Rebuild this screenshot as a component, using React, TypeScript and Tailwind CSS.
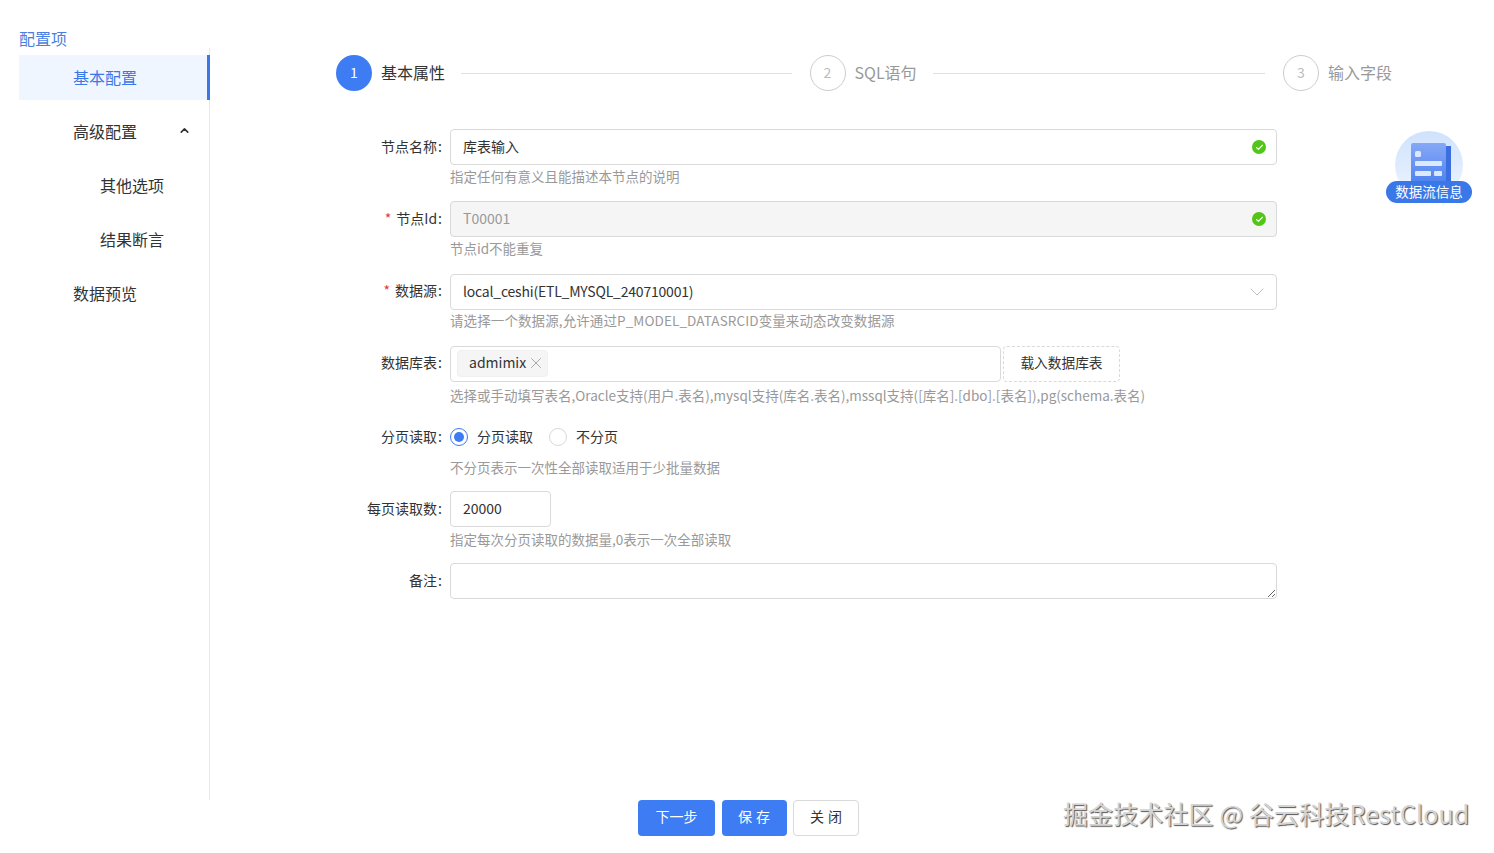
import { Check, ChevronDown, ChevronUp, X } from "lucide-react";
import type { ReactNode } from "react";

const font = "font-['Noto_Sans_CJK_SC','Noto_Sans',sans-serif]";

const steps = [
  { n: 1, label: "基本属性", active: true },
  { n: 2, label: "SQL语句", active: false },
  { n: 3, label: "输入字段", active: false },
];

const Status = () => (
  <span className="absolute right-[11px] top-[11px] flex h-[14px] w-[14px] items-center justify-center rounded-full bg-[#52c41a]">
    <Check className="h-[9px] w-[9px] text-white" strokeWidth={3} />
  </span>
);

const Row = ({
  label,
  required,
  help,
  helpClass = "",
  labelClass = "pb-[2px]",
  children,
}: {
  label: string;
  required?: boolean;
  help?: string;
  helpClass?: string;
  labelClass?: string;
  children: ReactNode;
}) => (
  <div className="flex h-[72.4px]">
    <label className={`flex h-9 w-[106px] shrink-0 items-center justify-end text-[14px] text-[#333] ${labelClass}`}>
      {required && <span className="mr-[5px] text-[14px] text-[#e5383b]">*</span>}
      {label}
      <span className="ml-[1px]">:</span>
    </label>
    <div className="ml-2 w-[827px]">
      {children}
      {help && (
        <div className={`h-6 whitespace-nowrap text-[13.5px] leading-[22px] text-[#999] ${helpClass}`}>{help}</div>
      )}
    </div>
  </div>
);

const inputBox = "h-9 rounded border border-[#d9d9d9] px-3 pb-[2px] text-[14px] text-[#333] outline-none";

export default function App() {
  return (
    <div className={`relative h-[853px] w-[1494px] overflow-hidden bg-white ${font}`}>
      <div className="flex h-[800px]">
        {/* 左侧菜单 */}
        <aside className="flex w-[210px] shrink-0 flex-col pl-[19px] pt-[30px]">
          <div className="h-[18px] text-[16px] leading-[16px] text-[#4a7fe0]">配置项</div>
          <nav className="flex-1 border-r border-[#e8e8e8] pt-[7px] text-[16px] text-[#333]">
            <div className="mr-[-1px] flex h-[45px] items-center border-r-[3px] border-[#3b78e7] bg-[#eff6ff] pb-[2px] pl-[54px] text-[#3b78e7]">
              基本配置
            </div>
            <div className="mt-[9px] flex h-[45px] items-center justify-between pb-[2px] pl-[54px] pr-[18px]">
              高级配置
              <ChevronUp className="h-[13px] w-[13px] text-[#333]" strokeWidth={3} />
            </div>
            <div className="mt-[9px] flex h-[45px] items-center pb-[2px] pl-[81px]">其他选项</div>
            <div className="mt-[9px] flex h-[45px] items-center pb-[2px] pl-[81px]">结果断言</div>
            <div className="mt-[9px] flex h-[45px] items-center pb-[2px] pl-[54px]">数据预览</div>
          </nav>
        </aside>

        <main className="flex-1 pl-[126px] pt-[55px]">
          {/* 步骤条 */}
          <div className="flex h-9 w-[1056px] items-center">
            {steps.map((s, i) => (
              <div key={s.n} className={`flex items-center ${i < 2 ? "flex-1" : ""}`}>
                <span
                  className={`flex h-9 w-9 shrink-0 items-center justify-center rounded-full pb-[2px] text-[14px] ${
                    s.active ? "bg-[#3d7cf2] text-white" : "border border-[#ccc] text-[#bbb]"
                  }`}
                >
                  {s.n}
                </span>
                <span
                  className={`ml-[9px] whitespace-nowrap pb-[2px] text-[16px] ${s.active ? "text-[#333]" : "text-[#999]"}`}
                >
                  {s.label}
                </span>
                {i < 2 && <span className="ml-4 mr-[18px] h-px flex-1 bg-[#e0e0e0]" />}
              </div>
            ))}
          </div>

          {/* 表单 */}
          <form className="mt-[38px]">
            <Row label="节点名称" help="指定任何有意义且能描述本节点的说明">
              <div className="relative">
                <input readOnly value="库表输入" className={`${inputBox} w-full`} />
                <Status />
              </div>
            </Row>
            <Row label="节点Id" required help="节点id不能重复">
              <div className="relative">
                <input readOnly value="T00001" className={`${inputBox} w-full bg-[#f5f5f5] text-[#999]`} />
                <Status />
              </div>
            </Row>
            <Row
              label="数据源"
              required
              help="请选择一个数据源,允许通过P_MODEL_DATASRCID变量来动态改变数据源"
              helpClass="-mt-px tracking-[0.1px]"
            >
              <div className="relative">
                <input
                  readOnly
                  value="local_ceshi(ETL_MYSQL_240710001)"
                  className={`${inputBox} w-full tracking-[-0.2px]`}
                />
                <ChevronDown className="absolute right-2 top-[6px] h-6 w-6 text-[#bfbfbf]" strokeWidth={1} />
              </div>
            </Row>
            <Row
              label="数据库表"
              labelClass="pb-1"
              help="选择或手动填写表名,Oracle支持(用户.表名),mysql支持(库名.表名),mssql支持([库名].[dbo].[表名]),pg(schema.表名)"
              helpClass="mt-[2px]"
            >
              <div className="flex">
                <div className="flex h-9 w-[551px] items-center rounded border border-[#d9d9d9] pb-px pl-[6px]">
                  <span className="flex h-[27px] w-[91px] items-center rounded-sm border border-[#f0f0f0] bg-[#f5f5f5] pb-[2px] pl-[11px] text-[14px] text-[#333]">
                    admimix
                    <X className="ml-[1px] h-[18px] w-[18px] text-[#999]" strokeWidth={1.1} />
                  </span>
                </div>
                <button
                  type="button"
                  className="ml-[2px] h-9 w-[117px] rounded border border-dashed border-[#d9d9d9] pb-1 text-[13.7px] text-[#333]"
                >
                  载入数据库表
                </button>
              </div>
            </Row>
            <Row label="分页读取" labelClass="" help="不分页表示一次性全部读取适用于少批量数据" helpClass="mt-px">
              <div className="flex h-9 items-center text-[14px] text-[#333]">
                <span className="flex h-[18px] w-[18px] items-center justify-center rounded-full border border-[#3d7cf2]">
                  <span className="h-[10px] w-[10px] rounded-full bg-[#3d7cf2]" />
                </span>
                <span className="ml-[9px]">分页读取</span>
                <span className="ml-4 h-[18px] w-[18px] rounded-full border border-[#d9d9d9]" />
                <span className="ml-[9px]">不分页</span>
              </div>
            </Row>
            <Row label="每页读取数" labelClass="" help="指定每次分页读取的数据量,0表示一次全部读取" helpClass="mt-px">
              <input readOnly value="20000" className={`${inputBox} w-[101px]`} />
            </Row>
            <Row label="备注">
              <textarea readOnly className="block h-9 w-full resize-y rounded border border-[#d9d9d9] outline-none" />
            </Row>
          </form>
        </main>
      </div>

      {/* 底部按钮 */}
      <div className="flex justify-center gap-[6px] pl-[3px] text-[14px]">
        <button className="mr-px h-9 w-[77px] rounded bg-[#3d7cf2] pb-1 text-white">下一步</button>
        <button className="h-9 w-[65px] rounded bg-[#3d7cf2] pb-1 pl-[3px] tracking-[4px] text-white">保存</button>
        <button className="h-9 w-[66px] rounded border border-[#d9d9d9] pb-1 pl-1 tracking-[4px] text-[#333]">
          关闭
        </button>
      </div>

      {/* 数据流信息悬浮按钮 */}
      <div className="absolute left-[1386px] top-[131px] h-[72px] w-[86px]">
        <div className="absolute left-[9px] top-0 h-[68px] w-[68px] rounded-full bg-gradient-to-b from-[#cfe2fd] to-[#eef5ff]" />
        <svg className="absolute left-[25px] top-[12px]" width="40" height="40" viewBox="0 0 40 40">
          <defs>
            <linearGradient id="doc" x1="0" y1="0" x2="0" y2="1">
              <stop offset="0" stopColor="#86a9f5" />
              <stop offset="1" stopColor="#4f82f0" />
            </linearGradient>
          </defs>
          <rect x="33" y="3" width="7" height="37" fill="#3b6fe0" />
          <rect x="0" y="0" width="35" height="40" rx="2" fill="url(#doc)" />
          <rect x="4" y="8" width="6" height="6" rx="1.5" fill="#dce8fd" />
          <rect x="4" y="18" width="27" height="5" rx="1" fill="#dce8fd" />
          <rect x="4" y="28" width="16" height="5" rx="1" fill="#dce8fd" />
          <rect x="23" y="28" width="8" height="5" rx="1" fill="#dce8fd" />
        </svg>
        <div className="absolute bottom-0 left-0 flex h-[22px] w-[86px] items-center justify-center rounded-full bg-[#3b78e7] pb-[2px] text-[13.5px] text-white">
          数据流信息
        </div>
      </div>

      {/* 水印 */}
      <div className="absolute left-[1063px] top-[795px] whitespace-nowrap text-[25px] leading-9 tracking-[0.12px] text-[#d4d4d4] [text-shadow:1px_1px_1px_#555]">
        掘金技术社区 @ 谷云科技RestCloud
      </div>
    </div>
  );
}
